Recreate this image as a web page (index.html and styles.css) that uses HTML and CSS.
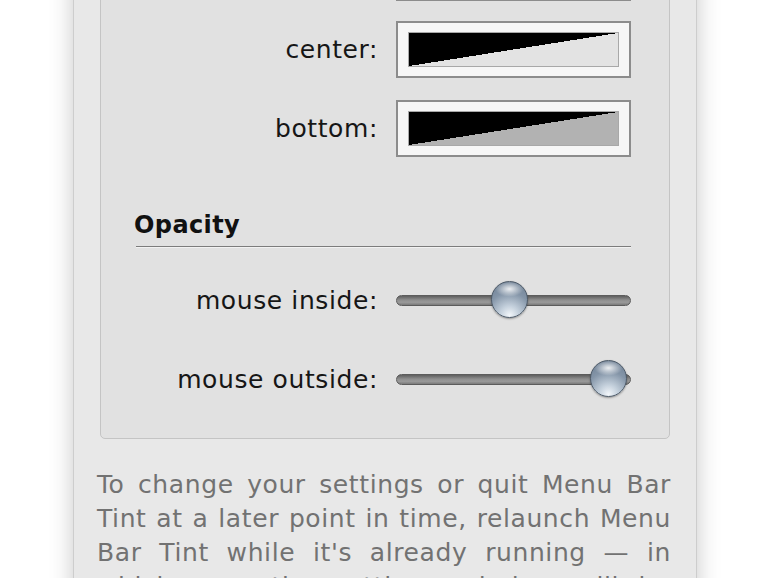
FILE: index.html
```html
<!DOCTYPE html>
<html>
<head>
<meta charset="utf-8">
<link rel="stylesheet" href="styles.css">
</head>
<body>
<div class="window">
  <div class="group">
    <div class="row swatch-row">
      <div class="label">top:</div>
      <div class="swatch"><div class="fill fill-top"></div></div>
    </div>
    <div class="row swatch-row gap20">
      <div class="label">center:</div>
      <div class="swatch"><div class="fill fill-center"></div></div>
    </div>
    <div class="row swatch-row gap22">
      <div class="label">bottom:</div>
      <div class="swatch"><div class="fill fill-bottom"></div></div>
    </div>
    <div class="heading">Opacity</div>
    <div class="row slider-row first">
      <div class="label">mouse inside:</div>
      <div class="slider"><div class="track"></div><div class="knob" style="--v: 0.48"></div></div>
    </div>
    <div class="row slider-row second">
      <div class="label">mouse outside:</div>
      <div class="slider"><div class="track"></div><div class="knob" style="--v: 0.98"></div></div>
    </div>
  </div>
  <p class="note">To change your settings or quit Menu Bar Tint at a later point in time, relaunch Menu Bar Tint while it's already running — in which case the settings window will be shown again.</p>
</div>
</body>
</html>
```
FILE: styles.css
```css
html, body {
  margin: 0;
  padding: 0;
  background: #ffffff;
  height: 578px;
  overflow: hidden;
}
body {
  font-family: "DejaVu Sans", "Liberation Sans", sans-serif;
}
.window {
  margin-left: 73px;
  width: 624px;
  height: 700px;
  box-sizing: border-box;
  background: #e8e8e8;
  border-left: 1px solid #cdcdcd;
  border-right: 1px solid #cdcdcd;
  box-shadow: 0 0 22px rgba(0, 0, 0, 0.22);
}
.group {
  margin: -57px 0 0 26px;
  width: 570px;
  box-sizing: border-box;
  background: #e1e1e1;
  border: 1px solid #c4c4c4;
  border-radius: 5px;
  padding-bottom: 39px;
}
.row {
  display: flex;
  align-items: center;
}
.label {
  width: 277px;
  text-align: right;
  font-size: 25px;
  letter-spacing: 0.6px;
  color: #161616;
  margin-right: 18px;
  flex: none;
}
.swatch-row { height: 57px; }
.gap20 { margin-top: 20px; }
.gap22 { margin-top: 22px; }
.swatch {
  width: 235px;
  height: 57px;
  box-sizing: border-box;
  border: 2px solid #8c8c8c;
  background: #f6f6f6;
  padding: 9px 10px;
}
.fill {
  height: 100%;
  box-sizing: border-box;
  border: 1px solid #a8a8a8;
}
.fill-top { background: linear-gradient(to bottom right, #000 50%, #d8d8d8 50%); }
.fill-center { background: linear-gradient(to bottom right, #000 50%, #e3e3e3 50%); }
.fill-bottom { background: linear-gradient(to bottom right, #000 50%, #b2b2b2 50%); }
.heading {
  margin: 53px 0 0 35px;
  width: 495px;
  font-size: 24px;
  font-weight: bold;
  letter-spacing: 0.4px;
  line-height: 30px;
  color: #111;
  padding-bottom: 6px;
  border-bottom: 1px solid #7c7c7c;
  box-shadow: 0 1px 0 #f2f2f2;
  text-indent: -2px;
}
.slider-row { height: 40px; }
.slider-row.first { margin-top: 33px; }
.slider-row.second { margin-top: 39px; }
.slider {
  position: relative;
  width: 235px;
  height: 40px;
}
.track {
  position: absolute;
  left: 0;
  right: 0;
  top: 15px;
  height: 11px;
  box-sizing: border-box;
  border-radius: 6px;
  border: 1px solid #5c5c5c;
  background: linear-gradient(#5e5e5e, #8e8e8e 45%, #9a9a9a 70%, #7a7a7a);
}
.knob {
  position: absolute;
  top: 1px;
  left: calc(var(--v) * 198px);
  width: 37px;
  height: 37px;
  box-sizing: border-box;
  border-radius: 50%;
  border: 1px solid #4d5a68;
  background:
    radial-gradient(ellipse 40% 22% at 50% 20%, rgba(255,255,255,0.85), rgba(255,255,255,0) 100%),
    radial-gradient(circle at 50% 95%, #f2f6fa 0, #c4d0dc 25%, #8495a8 60%, #6b7c90 100%);
  box-shadow: 0 1px 2px rgba(0,0,0,0.35);
}
.note {
  margin: 29px 25px 0 23px;
  font-size: 25px;
  letter-spacing: 0.6px;
  line-height: 34px;
  color: #727272;
  text-align: justify;
}
```
